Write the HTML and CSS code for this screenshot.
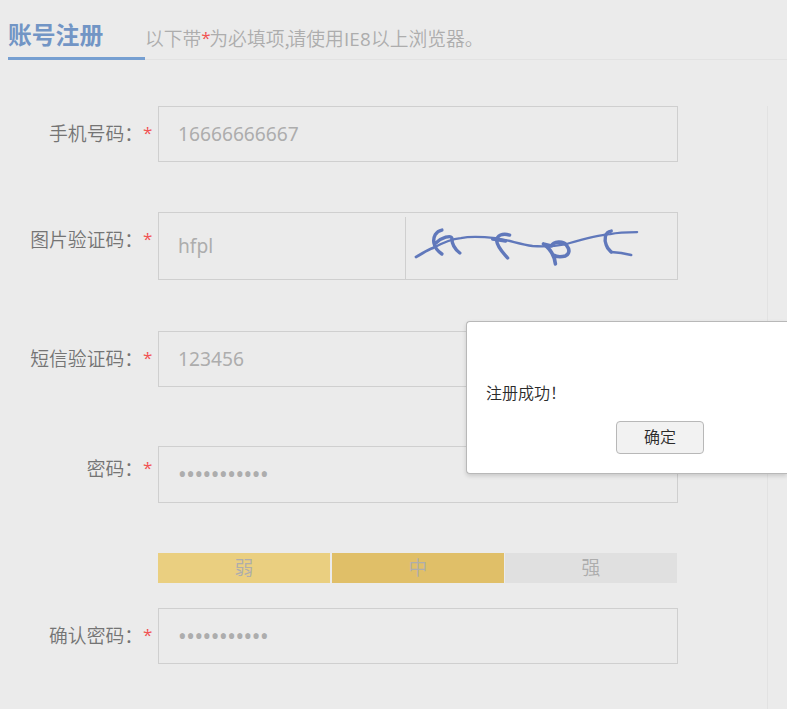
FILE: index.html
```html
<!DOCTYPE html>
<html lang="zh-CN">
<head>
<meta charset="utf-8">
<title>账号注册</title>
<link rel="stylesheet" href="styles.css">
</head>
<body>
<header class="head">
  <h1 class="title">账号注册</h1>
  <p class="hint">以下带<span class="req">*</span>为必填项<span class="comma">,</span>请使用<span class="latin">IE8</span>以上浏览器。</p>
</header>
<main class="form">
  <div class="row phone"><div class="label">手机号码：<span class="req">*</span></div><div class="field">16666666667</div></div>
  <div class="row captcha"><div class="label">图片验证码：<span class="req">*</span></div>
    <div class="field"><span class="code">hfpl</span>
      <svg class="scribble" width="271" height="62" viewBox="0 -1 271 62" fill="none" stroke="#6078bb" stroke-linecap="round" stroke-linejoin="round">
        <path stroke-width="2.8" d="M10 39C16 36 21 32 27 30"/>
        <path stroke-width="2.3" d="M27 30C36 25 45 21 55 20C66 18 79 19 90 20C103 22 114 26 127 28C139 29 151 28 161 26C178 21 191 17 205 16C214 14 221 14 232 14"/>
        <path stroke-width="3.4" d="M36 12C30 13 27 19 28 25C29 30 33 34 36 36M30 25C36 19 45 17 46 20C46 27 50 32 54 35"/>
        <path stroke-width="3.4" d="M104 17C97 15 91 17 91 23C92 30 98 35 102 40M87 21L100 23"/>
        <path stroke-width="3.6" d="M138 26C145 31 149 38 150 46M138 26C143 27 145 28 146 28C148 23 158 23 161 27C165 32 164 36 160 38C156 39 151 39 148 37"/>
        <path stroke-width="3.4" d="M206 13C199 14 199 22 201 27C202 31 205 33 206 34"/>
        <path stroke-width="2.6" d="M206 34L216 35L226 37"/>
      </svg>
    </div></div>
  <div class="row sms"><div class="label">短信验证码：<span class="req">*</span></div><div class="field">123456</div></div>
  <div class="row pass"><div class="label">密码：<span class="req">*</span></div><div class="field dots">•••••••••••</div></div>
  <div class="strength"><span class="level weak">弱</span><span class="level medium">中</span><span class="level strong">强</span></div>
  <div class="row confirm"><div class="label">确认密码：<span class="req">*</span></div><div class="field dots">•••••••••••</div></div>
</main>
<div class="dialog" role="alertdialog">
  <p class="message">注册成功！</p>
  <button class="ok">确定</button>
</div>
</body>
</html>
```
FILE: styles.css
```css
* { box-sizing: border-box; }
html, body { height: 100%; }
body {
  margin: 0;
  overflow: hidden;
  background: #ebebeb;
  color: #adadad;
  font: 350 18.8px/28px "Noto Sans CJK SC", sans-serif;
}
.head {
  display: flex;
  height: 60px;
  margin-left: 8px;
  border-bottom: 1px solid #e2e2e2;
}
.title {
  width: 137px;
  height: 60px;
  margin: 0;
  padding-top: 16px;
  border-bottom: 3px solid #769fd1;
  color: #7295c5;
  font-size: 23.8px;
  font-weight: 700;
  line-height: 36px;
}
.hint { margin: 0; padding-top: 24px; white-space: nowrap; }
.req {
  display: inline-block;
  width: 8px;
  color: #f15353;
  font-family: "Open Sans", sans-serif;
  font-weight: 400;
  font-size: 17px;
  line-height: 18px;
  text-align: center;
  vertical-align: 2px;
}
.comma { letter-spacing: -2px; }
.latin { font-family: "Open Sans", sans-serif; font-weight: 400; letter-spacing: 0.2px; }
.form {
  width: 760px;
  height: 603px;
  margin: 46px 0 0 8px;
  border-right: 1px solid #e2e2e2;
}
.row { display: flex; }
.label {
  width: 150px;
  padding: 13px 7px 0 0;
  color: #747474;
  text-align: right;
  white-space: nowrap;
}
.field {
  display: flex;
  align-items: center;
  width: 520px;
  height: 56px;
  padding-left: 19px;
  border: 1px solid #cfcfcf;
  font-family: "Noto Sans", sans-serif;
  font-weight: 400;
  font-size: 19.2px;
}
.captcha { margin-top: 50px; }
.captcha .field { height: 68px; }
.code { width: 227px; }
.scribble { margin-top: 4px; border-left: 1px solid #cfcfcf; }
.sms { margin-top: 51px; }
.pass { margin-top: 59px; }
.pass .field { height: 57px; }
.pass .label { padding-top: 8px; }
.field.dots { padding: 0 0 1px 19px; font-size: 23px; letter-spacing: -0.45px; }
.strength {
  display: flex;
  width: 519px;
  margin: 50px 0 25px 150px;
}
.level { width: 172px; height: 30px; text-align: center; line-height: 28px; }
.weak { margin-right: 2px; background: #eacf80; }
.medium { margin-right: 1px; background: #e0bf68; }
.strong { background: #e0e0e0; }
.dialog {
  position: absolute;
  top: 321px;
  left: 466px;
  right: 0;
  height: 153px;
  padding: 58px 0 0 19px;
  border: 1px solid #b8b8b8;
  border-right: 0;
  border-radius: 4px 0 0 4px;
  background: #fff;
  box-shadow: 0 2px 4px rgba(0, 0, 0, 0.15);
  color: #2b2b2b;
  font-size: 16px;
  line-height: 24px;
}
.message { margin: 0 0 17px; }
.ok {
  display: block;
  width: 88px;
  height: 33px;
  margin-left: 130px;
  padding: 0 0 3px;
  border: 1px solid #b8b8b8;
  border-radius: 4px;
  background: #f2f2f2;
  color: #2b2b2b;
  font: inherit;
}
```
